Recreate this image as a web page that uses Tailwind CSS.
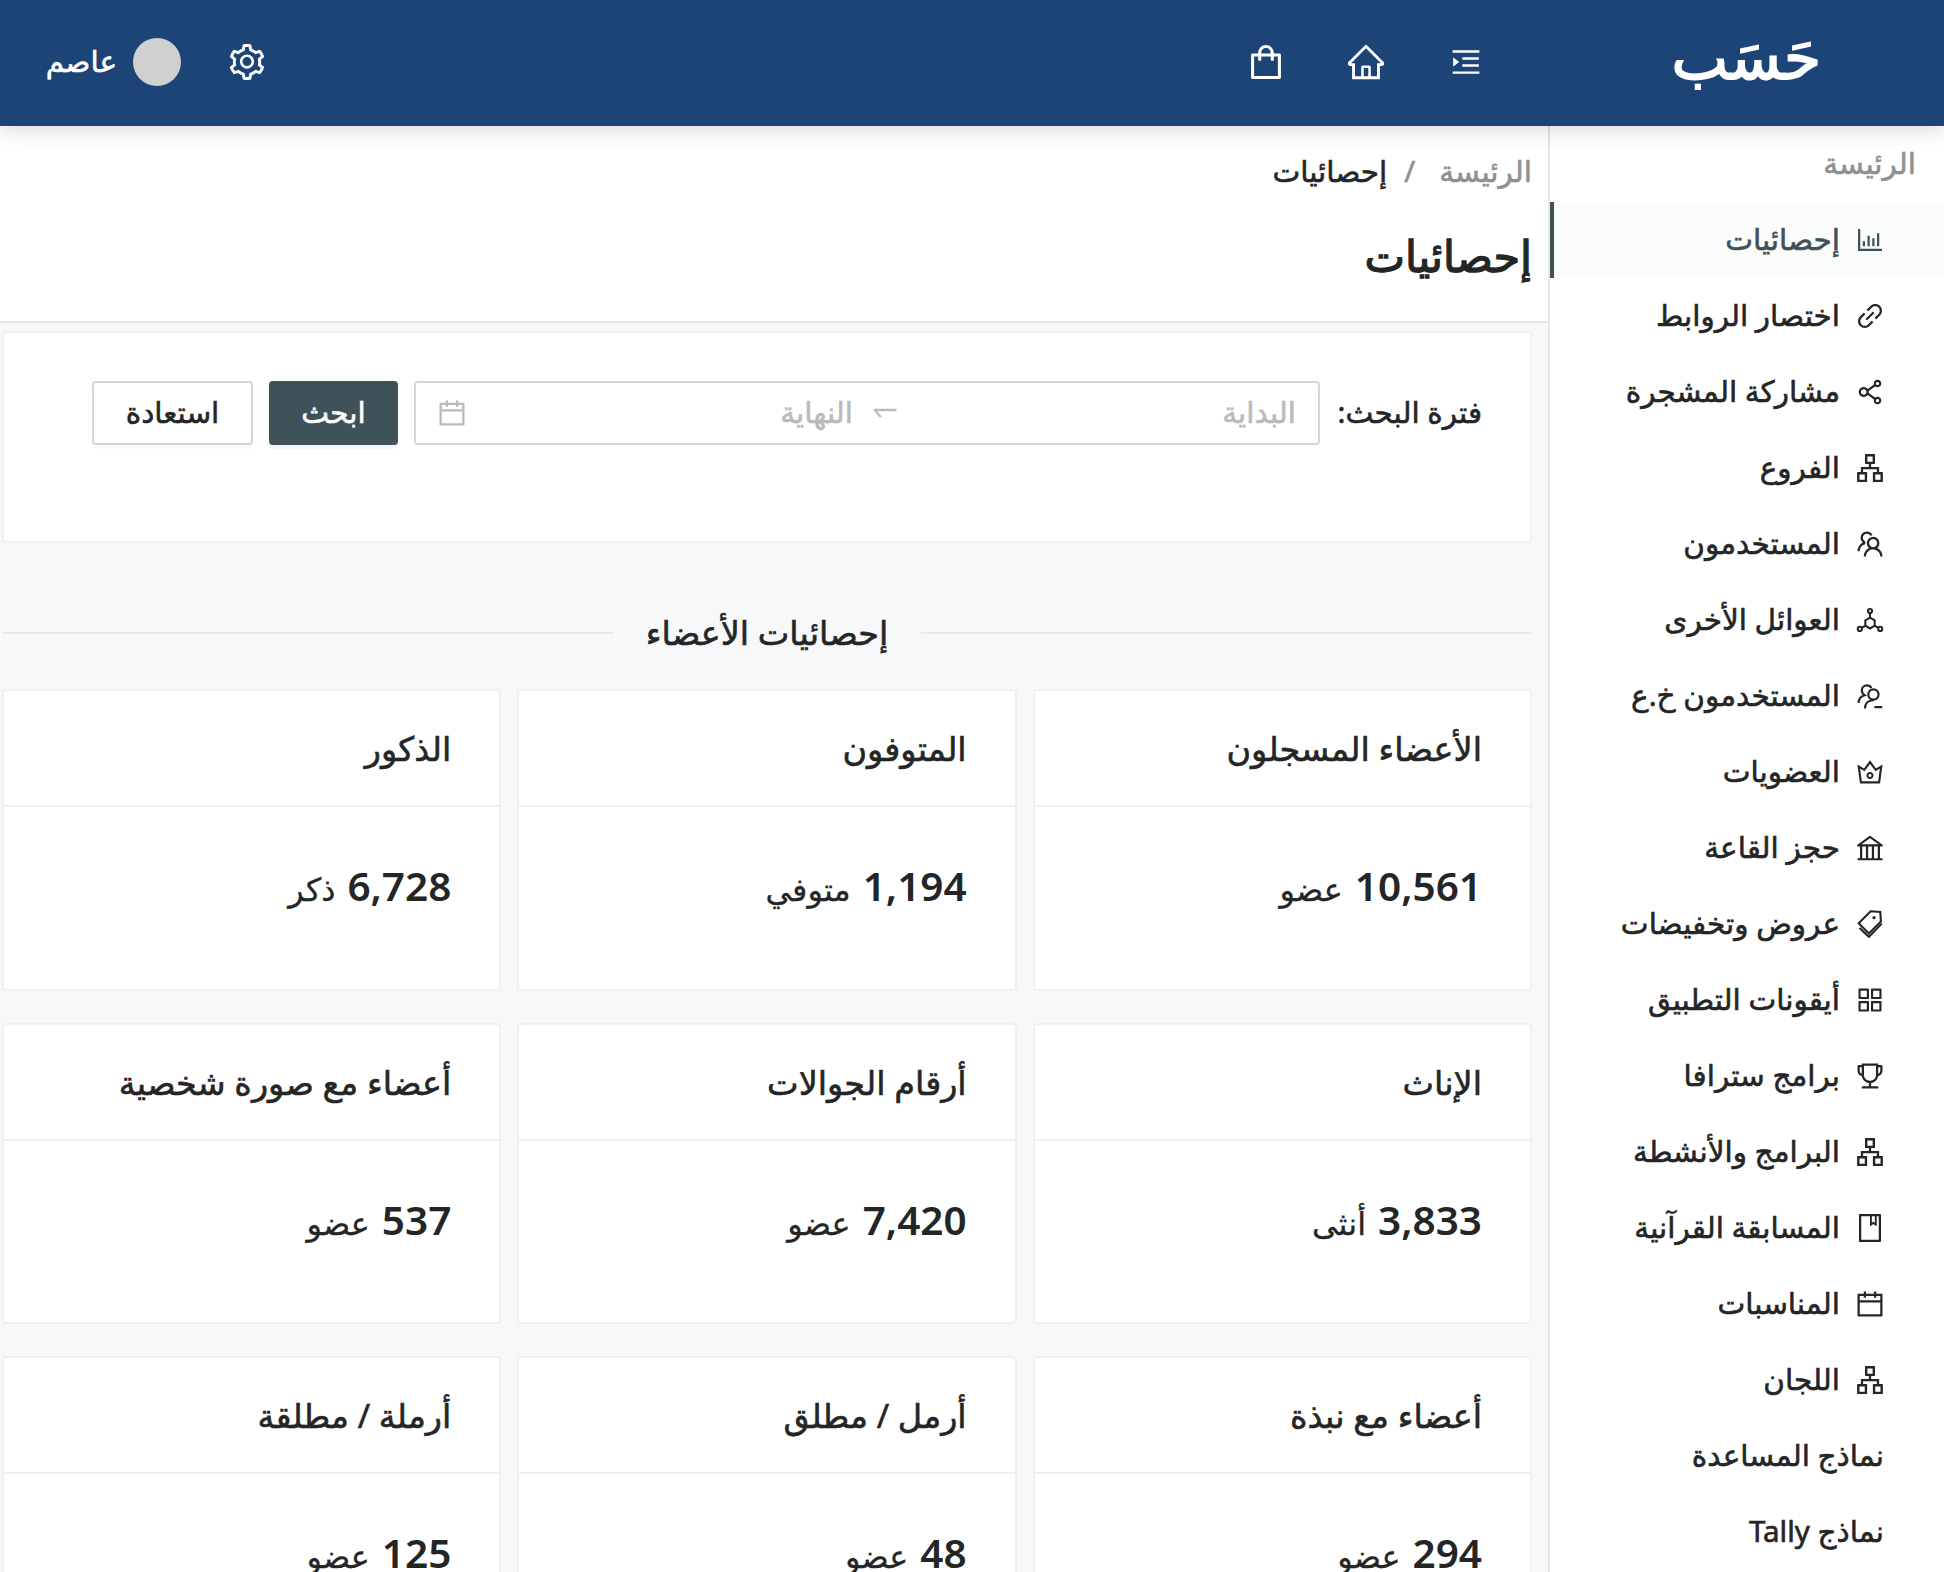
<!DOCTYPE html>
<html lang="ar" dir="rtl">
<head>
    <meta charset="UTF-8">
    <meta name="viewport" content="width=device-width, initial-scale=1.0">
    <title>إحصائيات</title>
    <script src="https://cdn.jsdelivr.net/npm/@tailwindcss/browser@4"></script>
</head>
<body class="h-[1572px] bg-[#f6f8fa] text-[#242626] font-['Noto_Sans','DejaVu_Sans',sans-serif] text-[29.5px] [-webkit-text-stroke:0.6px] overflow-hidden">
    <!-- Icon sprite -->
    <svg class="hidden">
        <symbol id="i-bar" viewBox="64 64 896 896"><path d="M888 792H200V168c0-4.400-3.600-8-8-8h-56c-4.400 0-8 3.600-8 8v688c0 4.400 3.600 8 8 8h752c4.400 0 8-3.600 8-8v-56c0-4.400-3.600-8-8-8zM288 712h64V552h-72v160zM432 712h72V376h-72zM584 712h72V454h-72zM736 712h72V296h-72z"/></symbol>
        <symbol id="i-link" viewBox="64 64 896 896"><path d="M574 665.4a8.03 8.03 0 00-11.3 0L446.5 781.6c-53.8 53.8-144.6 59.5-204 0-59.5-59.5-53.8-150.2 0-204l116.2-116.2c3.1-3.1 3.1-8.2 0-11.3l-39.8-39.8a8.03 8.03 0 00-11.3 0L191.4 526.5c-84.6 84.6-84.6 221.500 0 306s221.500 84.600 306 0l116.200-116.200c3.100-3.100 3.100-8.200 0-11.300L574 665.400zm258.600-474c-84.600-84.600-221.500-84.600-306 0L410.300 307.600a8.030 8.030 0 000 11.300l39.700 39.700c3.100 3.100 8.200 3.100 11.300 0l116.200-116.200c53.800-53.800 144.600-59.500 204 0 59.500 59.500 53.800 150.200 0 204L665.300 562.600a8.030 8.030 0 000 11.300l39.800 39.800c3.100 3.100 8.200 3.100 11.300 0l116.200-116.200c84.500-84.600 84.500-221.500 0-306.100zM610.100 372.300a8.030 8.030 0 00-11.300 0L372.300 598.700a8.030 8.030 0 000 11.300l39.600 39.600c3.100 3.100 8.200 3.100 11.300 0l226.400-226.400c3.100-3.100 3.100-8.200 0-11.300l-39.500-39.600z"/></symbol>
        <symbol id="i-share" viewBox="64 64 896 896"><path d="M752 664c-28.5 0-54.8 10-75.4 26.7L469.4 540.8a160.68 160.68 0 000-57.6l207.200-149.900C697.200 350 723.500 360 752 360c66.200 0 120-53.800 120-120s-53.800-120-120-120-120 53.800-120 120c0 11.600 1.600 22.700 4.700 33.300L439.900 415.800C410.700 377.100 364.300 352 312 352c-88.400 0-160 71.600-160 160s71.600 160 160 160c52.300 0 98.700-25.100 127.900-63.800l196.800 142.500c-3.100 10.600-4.700 21.800-4.700 33.300 0 66.200 53.800 120 120 120s120-53.800 120-120-53.800-120-120-120zm0-476c28.700 0 52 23.300 52 52s-23.300 52-52 52-52-23.300-52-52 23.300-52 52-52zM312 600c-48.500 0-88-39.500-88-88s39.500-88 88-88 88 39.500 88 88-39.500 88-88 88zm440 236c-28.700 0-52-23.300-52-52s23.300-52 52-52 52 23.300 52 52-23.300 52-52 52z"/></symbol>
        <symbol id="i-apartment" viewBox="64 64 896 896"><path d="M908 640H804V488c0-4.400-3.600-8-8-8H548v-96h108c8.800 0 16-7.200 16-16V80c0-8.800-7.200-16-16-16H368c-8.800 0-16 7.200-16 16v288c0 8.800 7.200 16 16 16h108v96H228c-4.400 0-8 3.600-8 8v152H116c-8.800 0-16 7.200-16 16v288c0 8.800 7.200 16 16 16h288c8.800 0 16-7.200 16-16V656c0-8.800-7.200-16-16-16H292v-88h440v88H620c-8.800 0-16 7.200-16 16v288c0 8.800 7.200 16 16 16h288c8.800 0 16-7.200 16-16V656c0-8.800-7.200-16-16-16zm-564 76v168H176V716h168zm84-408V140h168v168H428zm420 576H680V716h168v168z"/></symbol>
        <symbol id="i-team" viewBox="64 64 896 896"><path d="M824.2 699.9a301.55 301.55 0 00-86.400-60.400C783.100 602.800 812 546.800 812 484c0-110.800-92.400-201.700-203.200-200-109.100 1.700-197 90.600-197 200 0 62.800 29 118.800 74.200 155.500a300.950 300.950 0 00-86.400 60.400C345 754.600 314 826.800 312 903.800a8 8 0 008 8.200h56c4.300 0 7.900-3.400 8-7.700 1.900-58 25.400-112.300 66.700-153.500A226.620 226.620 0 01612 684c60.900 0 118.200 23.700 161.300 66.800C814.600 792 838 846.300 840 904.300c.1 4.300 3.700 7.700 8 7.700h56a8 8 0 008-8.200c-2-77-33-149.200-87.800-203.900zM612 612c-34.200 0-66.400-13.300-90.500-37.500a126.860 126.860 0 01-37.500-91.800c.3-32.800 13.400-64.500 36.300-88 24-24.600 56.100-38.300 90.400-38.700 33.900-.3 66.800 12.900 91 36.600 24.800 24.300 38.400 56.800 38.400 91.400 0 34.200-13.300 66.300-37.500 90.500A127.300 127.300 0 01612 612zM361.500 510.400c-.9-8.700-1.400-17.500-1.400-26.400 0-15.900 1.500-31.400 4.300-46.500.7-3.600-1.200-7.300-4.500-8.800-13.600-6.100-26.100-14.500-36.900-25.100a127.540 127.540 0 01-38.700-95.400c.9-32.100 13.800-62.600 36.300-85.600 24.700-25.300 57.900-39.100 93.200-38.700 31.900.3 62.700 12.600 86 34.400 7.900 7.400 14.700 15.600 20.400 24.400 2 3.100 5.900 4.400 9.300 3.200 17.600-6.100 36.200-10.400 55.300-12.400 5.600-.6 8.800-6.600 6.300-11.600-32.500-64.300-98.900-108.700-175.700-109.900-110.900-1.700-203.300 89.200-203.300 199.900 0 62.800 28.900 118.800 74.200 155.500-31.800 14.700-61.100 35-86.500 60.400-54.800 54.700-85.800 126.900-87.800 204a8 8 0 008 8.200h56.100c4.300 0 7.900-3.400 8-7.700 1.900-58 25.400-112.300 66.700-153.500 29.400-29.400 65.400-49.800 104.700-59.700 3.900-1 6.500-4.700 6-8.700z"/></symbol>
        <symbol id="i-unit" viewBox="64 64 896 896"><g fill="none" stroke="currentColor" stroke-width="66"><path d="M512 438l150 86v172l-150 86-150-86V524zM512 290v148M362 696l-118 66M662 696l118 66"/><circle cx="512" cy="224" r="66"/><circle cx="186" cy="796" r="66"/><circle cx="838" cy="796" r="66"/></g></symbol>
        <symbol id="i-group" viewBox="64 64 896 896"><g fill="none" stroke="currentColor" stroke-width="70"><circle cx="622" cy="464" r="164"/><path d="M348 912c4-120 70-262 274-264M652 870h252M146 732c4-110 60-210 192-246-60-40-88-96-88-150 0-96 74-164 164-164 62 0 114 30 142 82"/></g></symbol>
        <symbol id="i-crown" viewBox="64 64 896 896"><path d="M899.6 276.5L705 396.4 518.4 147.5a8.06 8.06 0 00-12.900 0L319 396.400 124.300 276.500c-5.700-3.500-13.100 1.200-12.200 7.900L188.500 865c1.100 7.900 7.900 14 16 14h615.100c8 0 14.900-6 15.900-14l76.400-580.600c.8-6.700-6.500-11.400-12.300-7.900zm-126 534.100H250.300l-53.800-409.400 139.800 86.100L512 252.900l175.700 234.400 139.800-86.100-53.900 409.400zM512 509c-62.100 0-112.600 50.500-112.600 112.600S449.900 734.200 512 734.200s112.600-50.500 112.600-112.600S574.100 509 512 509zm0 160.900c-26.600 0-48.200-21.600-48.200-48.300 0-26.600 21.600-48.300 48.200-48.300s48.200 21.600 48.200 48.300c0 26.600-21.600 48.300-48.200 48.300z"/></symbol>
        <symbol id="i-bank" viewBox="64 64 896 896"><path d="M894 462c30.900 0 43.800-39.700 18.700-58L530.800 126.200a31.810 31.810 0 00-37.600 0L111.300 404c-25.100 18.200-12.200 58 18.800 58H192v374h-72c-4.400 0-8 3.600-8 8v52c0 4.400 3.600 8 8 8h784c4.400 0 8-3.600 8-8v-52c0-4.400-3.600-8-8-8h-72V462h62zM512 196.700l271.100 197.200H240.900L512 196.700zM264 462h117v374H264V462zm189 0h117v374H453V462zm307 374H642V462h118v374z"/></symbol>
        <symbol id="i-tags" viewBox="64 64 896 896"><g fill="none" stroke="currentColor" stroke-width="68"><path d="M532 104l310 20 18 308-382 386-328-330z"/><path d="M176 640l300 284 412-424"/></g><circle cx="640" cy="310" r="52"/></symbol>
        <symbol id="i-appstore" viewBox="64 64 896 896"><path d="M464 144H160c-8.800 0-16 7.200-16 16v304c0 8.800 7.200 16 16 16h304c8.800 0 16-7.200 16-16V160c0-8.800-7.200-16-16-16zm-52 268H212V212h200v200zm452-268H560c-8.800 0-16 7.200-16 16v304c0 8.800 7.200 16 16 16h304c8.800 0 16-7.200 16-16V160c0-8.800-7.200-16-16-16zm-52 268H612V212h200v200zM464 544H160c-8.800 0-16 7.200-16 16v304c0 8.800 7.200 16 16 16h304c8.800 0 16-7.200 16-16V560c0-8.800-7.200-16-16-16zm-52 268H212V612h200v200zm452-268H560c-8.800 0-16 7.200-16 16v304c0 8.800 7.200 16 16 16h304c8.800 0 16-7.200 16-16V560c0-8.800-7.200-16-16-16zm-52 268H612V612h200v200z"/></symbol>
        <symbol id="i-trophy" viewBox="64 64 896 896"><path d="M868 160h-92v-40c0-4.400-3.600-8-8-8H256c-4.400 0-8 3.600-8 8v40h-92a44 44 0 00-44 44v148c0 81.700 60 149.600 138.200 162C265.700 630.200 359 721.700 476 734.500v105.200H280c-17.700 0-32 14.300-32 32V904c0 4.400 3.600 8 8 8h512c4.400 0 8-3.600 8-8v-32.300c0-17.700-14.300-32-32-32H548V734.500C665 721.700 758.300 630.200 773.800 514 852 501.600 912 433.700 912 352V204a44 44 0 00-44-44zM184 352V232h64v207.600a91.990 91.990 0 01-64-87.600zm520 128c0 49.100-19.100 95.400-53.900 130.100-34.800 34.800-81 53.900-130.100 53.900h-16c-49.100 0-95.400-19.100-130.100-53.900-34.800-34.800-53.900-81-53.900-130.100V184h384v296zm136-128c0 41-26.900 75.800-64 87.600V232h64v120z"/></symbol>
        <symbol id="i-book" viewBox="64 64 896 896"><path d="M832 64H192c-17.700 0-32 14.300-32 32v832c0 17.700 14.300 32 32 32h640c17.700 0 32-14.300 32-32V96c0-17.700-14.300-32-32-32zm-260 72h96v209.900L621.500 312 572 347.400V136zm220 752H232V136h280v296.900c0 3.300 1 6.600 3 9.300a15.900 15.900 0 0022.300 3.700l83.800-59.900 81.400 59.400c2.700 2 6 3.100 9.400 3.100 8.800 0 16-7.200 16-16V136h64v752z"/></symbol>
        <symbol id="i-calendar" viewBox="64 64 896 896"><path d="M880 184H712v-64c0-4.400-3.600-8-8-8h-56c-4.400 0-8 3.600-8 8v64H384v-64c0-4.400-3.600-8-8-8h-56c-4.400 0-8 3.600-8 8v64H144c-17.700 0-32 14.300-32 32v664c0 17.700 14.300 32 32 32h736c17.700 0 32-14.300 32-32V216c0-17.700-14.300-32-32-32zm-40 656H184V460h656v380zM184 392V256h128v48c0 4.400 3.600 8 8 8h56c4.400 0 8-3.600 8-8v-48h256v48c0 4.400 3.600 8 8 8h56c4.400 0 8-3.600 8-8v-48h128v136H184z"/></symbol>
        <symbol id="i-swap" viewBox="0 0 1024 1024"><path transform="rotate(180 512 512)" d="M873.100 596.200l-164-208A32 32 0 00684 376h-64.800c-6.700 0-10.400 7.700-6.300 13l144.300 183H152c-4.400 0-8 3.600-8 8v60c0 4.400 3.600 8 8 8h695.900c26.800 0 41.700-30.800 25.200-51.800z"/></symbol>
        <symbol id="i-bag" viewBox="64 64 896 896"><path d="M832 312H696v-16c0-101.600-82.400-184-184-184s-184 82.400-184 184v16H192c-17.700 0-32 14.300-32 32v536c0 17.700 14.300 32 32 32h640c17.700 0 32-14.300 32-32V344c0-17.700-14.300-32-32-32zm-432-16c0-61.900 50.100-112 112-112s112 50.100 112 112v16H400v-16zm392 544H232V384h96v88c0 4.400 3.600 8 8 8h56c4.400 0 8-3.600 8-8v-88h224v88c0 4.400 3.600 8 8 8h56c4.400 0 8-3.600 8-8v-88h96v456z"/></symbol>
        <symbol id="i-home" viewBox="64 64 896 896"><path d="M946.500 505L560.100 118.800l-25.900-25.900a31.500 31.500 0 00-44.400 0L77.500 505a63.900 63.900 0 00-18.800 46c.4 35.200 29.700 63.300 64.900 63.300h42.500V940h691.800V614.300h43.400c17.100 0 33.200-6.700 45.300-18.800a63.600 63.600 0 0018.700-45.300c0-17-6.700-33.100-18.800-45.200zM568 868H456V664h112v204zm217.900-325.700V868H632V640c0-22.100-17.900-40-40-40H432c-22.100 0-40 17.900-40 40v228H238.100V542.300h-96l370-369.700 23.100 23.100L882 542.300h-96.100z"/></symbol>
        <symbol id="i-unfold" viewBox="64 64 896 896"><path d="M400 370h496v72H400zM400 582h496v72H400zM112 160h800v72H112zM112 792h800v72H112zM142.400 642.100L298.700 519a8.840 8.840 0 000-13.900L142.400 381.900c-5.800-4.600-14.400-.5-14.400 6.900v246.300a8.900 8.900 0 0014.400 7z"/></symbol>
        <symbol id="i-setting" viewBox="64 64 896 896"><path d="M924.8 625.7l-65.5-56c3.1-19 4.7-38.4 4.7-57.8s-1.600-38.800-4.700-57.800l65.500-56a32.030 32.030 0 009.300-35.200l-.9-2.600a443.740 443.740 0 00-79.700-137.900l-1.800-2.100a32.120 32.120 0 00-35.100-9.500l-81.300 28.900c-30-24.600-63.500-44-99.700-57.600l-15.700-85a32.050 32.050 0 00-25.800-25.700l-2.700-.5c-52.100-9.400-106.900-9.400-159 0l-2.700.5a32.050 32.050 0 00-25.800 25.700l-15.800 85.400a351.860 351.860 0 00-99 57.400l-81.900-29.100a32 32 0 00-35.100 9.500l-1.800 2.100a446.020 446.020 0 00-79.700 137.900l-.9 2.600c-4.500 12.500-.8 26.500 9.300 35.200l66.300 56.600c-3.100 18.800-4.600 38-4.600 57.100 0 19.200 1.500 38.400 4.600 57.100L99 625.500a32.030 32.030 0 00-9.300 35.200l.9 2.600c18.100 50.400 44.900 96.900 79.700 137.900l1.800 2.100a32.120 32.120 0 0035.100 9.500l81.900-29.100c29.800 24.500 63.100 43.900 99 57.400l15.800 85.400a32.050 32.050 0 0025.800 25.700l2.700.5a449.400 449.400 0 00159 0l2.700-.5a32.050 32.050 0 0025.800-25.700l15.700-85a350 350 0 0099.700-57.600l81.300 28.900a32 32 0 0035.100-9.500l1.800-2.100c34.800-41.100 61.600-87.500 79.700-137.900l.9-2.600c4.500-12.300.8-26.300-9.300-35zM788.300 465.900c2.500 15.100 3.800 30.600 3.800 46.100s-1.300 31-3.800 46.100l-6.600 40.100 74.700 63.900a370.030 370.030 0 01-42.600 73.600L721 702.800l-31.400 25.800c-23.900 19.600-50.500 35-79.300 45.800l-38.100 14.300-17.900 97a377.500 377.500 0 01-85 0l-17.900-97.200-37.800-14.500c-28.500-10.800-55-26.200-78.700-45.700l-31.400-25.900-93.400 33.200c-17-22.900-31.200-47.600-42.600-73.600l75.500-64.500-6.500-40c-2.400-14.900-3.700-30.300-3.700-45.500 0-15.300 1.200-30.600 3.700-45.500l6.500-40-75.500-64.500c11.300-26.100 25.600-50.700 42.600-73.600l93.400 33.200 31.400-25.900c23.700-19.500 50.200-34.900 78.700-45.700l37.900-14.300 17.900-97.200c28.100-3.200 56.800-3.200 85 0l17.900 97 38.100 14.300c28.700 10.800 55.400 26.200 79.300 45.800l31.400 25.800 92.800-32.900c17 22.900 31.200 47.600 42.600 73.600L781.800 426l6.500 39.900zM512 326c-97.200 0-176 78.800-176 176s78.800 176 176 176 176-78.800 176-176-78.800-176-176-176zm79.200 255.200A111.600 111.600 0 01512 614c-29.900 0-58-11.700-79.200-32.800A111.600 111.600 0 01400 502c0-29.900 11.700-58 32.800-79.200C454 401.600 482.100 390 512 390c29.900 0 58 11.600 79.200 32.800A111.600 111.600 0 01624 502c0 29.900-11.700 58-32.800 79.200z"/></symbol>
    </svg>

    <!-- Header -->
    <header class="relative z-10 flex items-center h-[126px] pr-[123px] pl-[46px] pb-0.5 bg-[#1d4477] text-white shadow-[0_4px_20px_rgba(0,0,0,0.15)]">
        <div class="w-[146px] pb-3 text-[60px] leading-[80px] [-webkit-text-stroke:1.8px] whitespace-nowrap">حَسَب</div>
        <nav class="flex items-center mr-[194px]">
            <svg class="size-[30px] fill-current"><use href="#i-unfold"/></svg>
            <svg class="size-9 fill-current mr-[67px]"><use href="#i-home"/></svg>
            <svg class="size-[38px] fill-current mr-[63px]"><use href="#i-bag"/></svg>
        </nav>
        <div class="flex items-center mr-auto">
            <svg class="size-9 fill-current"><use href="#i-setting"/></svg>
            <div class="size-12 rounded-full bg-[#cfd1d1] mr-12"></div>
            <span class="mr-4 w-[71px] pb-0.5 whitespace-nowrap">عاصم</span>
        </div>
    </header>

    <div class="flex h-[1446px] overflow-hidden">
        <!-- Sidebar -->
        <aside class="w-[396px] shrink-0 bg-white border-l-2 border-[#e6e6e6]">
            <div class="h-[76px] pr-7 leading-[74px] text-[#8f9191]">الرئيسة</div>
            <ul id="menu"></ul>
        </aside>

        <!-- Main content -->
        <main class="flex-1 min-w-0">
            <div class="h-[197px] bg-white border-b-2 border-[#e6e6e6] pr-4 pt-[23px]">
                <div class="flex items-center h-11">
                    <span class="text-[#8f9191]">الرئيسة</span>
                    <span class="text-[#8f9191] mr-6 ml-[17px]">/</span>
                    <span>إحصائيات</span>
                </div>
                <h1 class="mt-[31px] text-[43px] leading-[64px] [-webkit-text-stroke:1.3px]">إحصائيات</h1>
            </div>

            <div class="pr-4 pl-0.5 pt-2">
                <form class="flex items-start h-[212px] bg-white border-2 border-[#eff1f1] rounded-[4px] pt-12 pr-12">
                    <label class="w-[146px] h-16 leading-[62px] whitespace-nowrap">فترة البحث:</label>
                    <div class="mr-4 flex items-center w-[906px] h-16 border-2 border-[#d6d6d6] rounded-[4px] px-[22px] text-[#b9bbbb]">
                        <span class="w-[395px] pb-0.5">البداية</span>
                        <svg class="size-8 fill-current"><use href="#i-swap"/></svg>
                        <span class="mr-4 pb-0.5">النهاية</span>
                        <svg class="size-7 fill-current mr-auto"><use href="#i-calendar"/></svg>
                    </div>
                    <button type="button" class="mr-4 w-[129px] h-16 pb-0.5 rounded-[4px] bg-[#3f5159] text-white shadow-[0_4px_0_rgba(0,0,0,0.04)]">ابحث</button>
                    <button type="button" class="mr-4 w-[161px] h-16 pb-0.5 rounded-[4px] border-2 border-[#d6d6d6] bg-white shadow-[0_4px_0_rgba(0,0,0,0.02)]">استعادة</button>
                </form>

                <div class="flex items-center mt-[58px] h-16">
                    <div class="flex-1 h-0.5 bg-[#e9eaeb]"></div>
                    <h2 class="w-[307px] pb-0.5 text-center text-[33.500px] whitespace-nowrap">إحصائيات الأعضاء</h2>
                    <div class="flex-1 h-0.5 bg-[#e9eaeb]"></div>
                </div>

                <div id="stats" class="grid grid-cols-3 gap-x-4 gap-y-8 mt-6"></div>
            </div>
        </main>
    </div>

    <script>
        const menu = [
            ['bar', 'إحصائيات'],
            ['link', 'اختصار الروابط'],
            ['share', 'مشاركة المشجرة'],
            ['apartment', 'الفروع'],
            ['team', 'المستخدمون'],
            ['unit', 'العوائل الأخرى'],
            ['group', 'المستخدمون خ.ع'],
            ['crown', 'العضويات'],
            ['bank', 'حجز القاعة'],
            ['tags', 'عروض وتخفيضات'],
            ['appstore', 'أيقونات التطبيق'],
            ['trophy', 'برامج سترافا'],
            ['apartment', 'البرامج والأنشطة'],
            ['book', 'المسابقة القرآنية'],
            ['calendar', 'المناسبات'],
            ['apartment', 'اللجان'],
            ['', 'نماذج المساعدة'],
            ['', 'نماذج Tally'],
        ];

        document.getElementById('menu').innerHTML = menu.map(([icon, label], i) => `
            <li class="flex items-center h-[76px] pr-[60px] whitespace-nowrap ${i === 0 ? 'bg-[#fbfcfc] text-[#3f5159] border-l-4 border-[#3f5159]' : ''}">
                ${icon ? `<svg class="size-7 fill-current ml-4"><use href="#i-${icon}"/></svg>` : ''}
                <span class="pb-0.5">${label}</span>
            </li>`).join('');

        const stats = [
            ['الأعضاء المسجلون', '10,561', 'عضو'],
            ['المتوفون', '1,194', 'متوفي'],
            ['الذكور', '6,728', 'ذكر'],
            ['الإناث', '3,833', 'أنثى'],
            ['أرقام الجوالات', '7,420', 'عضو'],
            ['أعضاء مع صورة شخصية', '537', 'عضو'],
            ['أعضاء مع نبذة', '294', 'عضو'],
            ['أرمل / مطلق', '48', 'عضو'],
            ['أرملة / مطلقة', '125', 'عضو'],
        ];

        document.getElementById('stats').innerHTML = stats.map(([title, value, unit]) => `
            <div class="h-[301.5px] bg-white border-2 border-[#eff1f1] rounded-[4px] whitespace-nowrap">
                <h3 class="h-[116px] pr-12 leading-[114px] text-[33.5px] border-b-2 border-[#eff1f1]">${title}</h3>
                <div class="flex items-baseline pr-12 pt-[47px] leading-[64px]">
                    <span class="text-[40.5px] font-semibold [-webkit-text-stroke:0px]">${value}</span>
                    <span class="text-[32px] mr-3 [-webkit-text-stroke:0.3px]">${unit}</span>
                </div>
            </div>`).join('');
    </script>
</body>
</html>
